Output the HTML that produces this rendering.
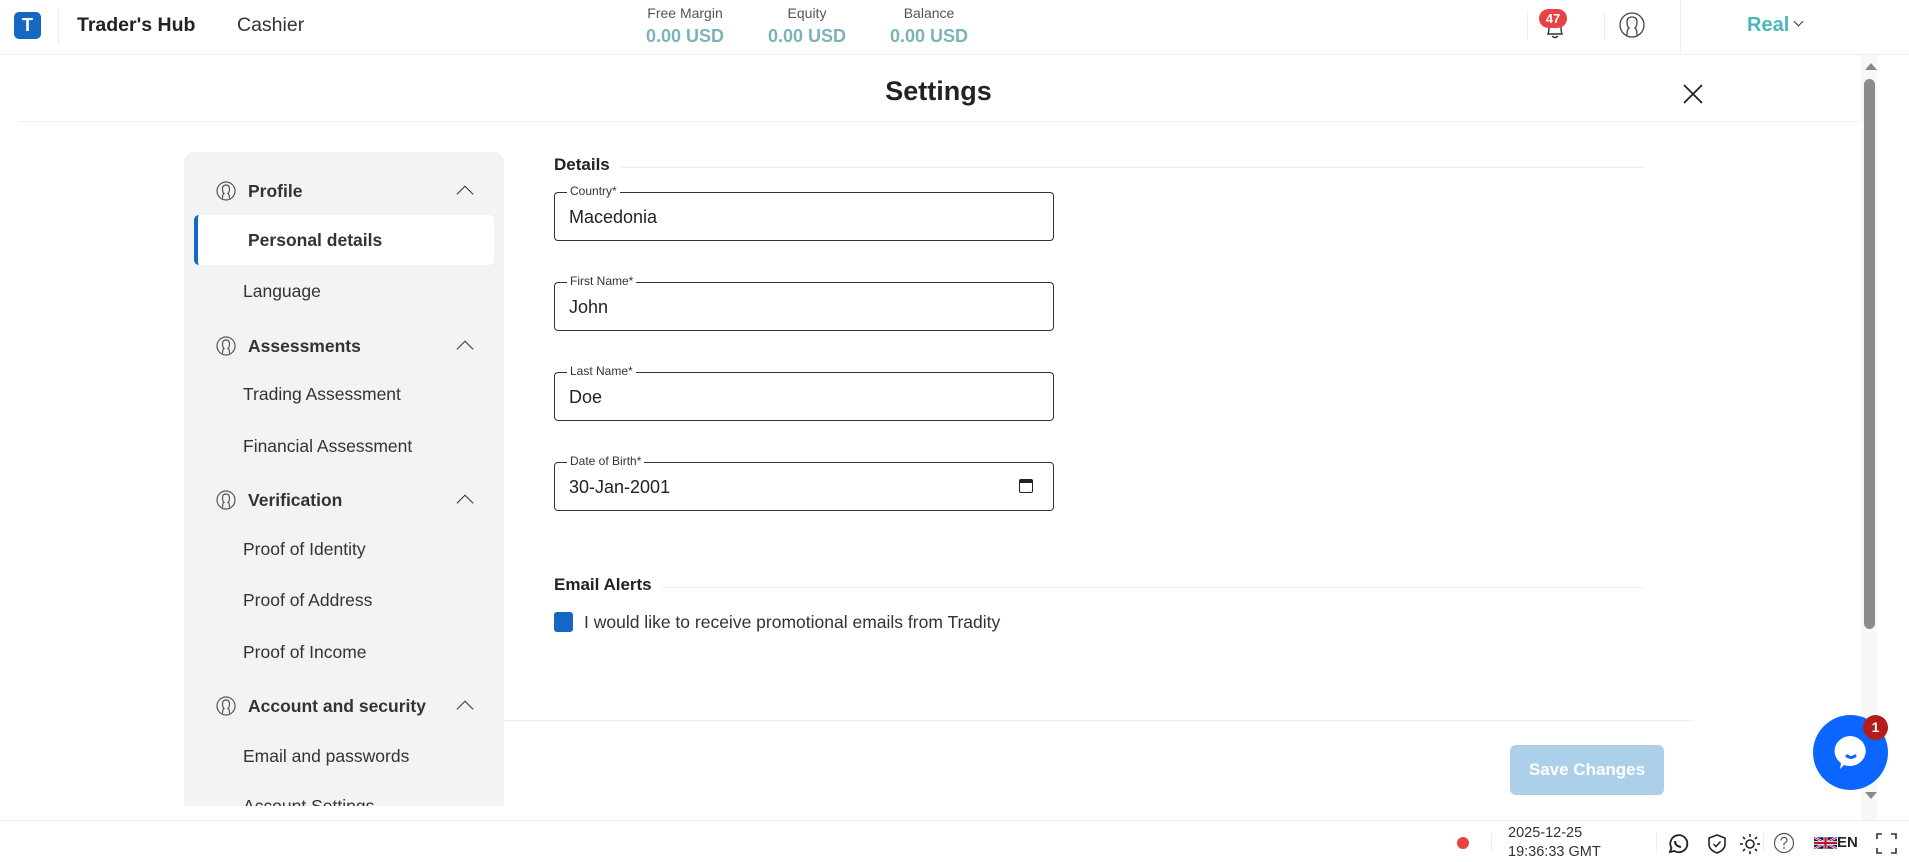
<!DOCTYPE html>
<html><head><meta charset="utf-8"><style>
*{box-sizing:border-box;margin:0;padding:0}
body{width:1909px;height:862px;overflow:hidden;background:#fff;font-family:"Liberation Sans",sans-serif;color:#333;position:relative}
.a{position:absolute}
.hdr{left:0;top:0;width:1909px;height:55px;border-bottom:1px solid #eee}
.lbl{font-size:14px;color:#555;text-align:center;width:120px}
.val{font-size:18px;font-weight:bold;color:#7ab4b8;text-align:center;width:130px}
.side{left:184px;top:152px;width:320px;height:654px;background:#f2f3f4;border-radius:10px 10px 0 0}
.it{font-size:17.5px;color:#333}
.hd{font-size:17.5px;font-weight:bold;color:#333}
.chev{width:12px;height:12px;border-left:1.8px solid #333;border-top:1.8px solid #333;transform:rotate(45deg)}
.inp{left:554px;width:500px;height:49px;border:1.5px solid #333;border-radius:4px}
.inp span.l{position:absolute;left:12px;top:-9px;background:#fff;padding:0 3px;font-size:12px;color:#333}
.inp span.v{position:absolute;left:14px;top:14px;font-size:18px;color:#222}
</style></head><body>
<div class="a hdr"></div>
<div class="a" style="left:14px;top:12px;width:27px;height:27px;background:#1467c2;border-radius:5px;color:#fff;font-weight:bold;font-size:18px;text-align:center;line-height:27px">T</div>
<div class="a" style="left:58px;top:8px;width:1px;height:36px;background:#eee"></div>
<div class="a" style="left:77px;top:14px;font-size:19.5px;font-weight:bold;color:#222">Trader's Hub</div>
<div class="a" style="left:237px;top:14px;font-size:19.5px;color:#333">Cashier</div>
<div class="a lbl" style="left:625px;top:5px">Free Margin</div><div class="a val" style="left:620px;top:26px">0.00 USD</div>
<div class="a lbl" style="left:747px;top:5px">Equity</div><div class="a val" style="left:742px;top:26px">0.00 USD</div>
<div class="a lbl" style="left:869px;top:5px">Balance</div><div class="a val" style="left:864px;top:26px">0.00 USD</div>
<div class="a" style="left:1527px;top:11px;width:1px;height:29px;background:#eee"></div>
<div class="a" style="left:1604px;top:11px;width:1px;height:29px;background:#eee"></div>
<div class="a" style="left:1680px;top:0;width:1px;height:55px;background:#eee"></div>
<svg class="a" style="left:1543px;top:14px" width="24" height="26" viewBox="0 0 24 26"><path d="M5 20 Q6 18 6 12 Q6 6 12 6 Q18 6 18 12 Q18 18 19 20 Z M9 22 Q12 25 15 22" fill="none" stroke="#333" stroke-width="1.4"/></svg>
<div class="a" style="left:1539px;top:9px;width:28px;height:19px;background:#e84343;border-radius:10px;color:#fff;font-weight:bold;font-size:13px;text-align:center;line-height:19px">47</div>
<svg class="a" style="left:1619px;top:12px" width="26" height="26" viewBox="0 0 26 26"><circle cx="13" cy="13" r="12" fill="none" stroke="#444" stroke-width="1.3"/><path d="M8 23 Q8 17 10 16 Q8 14 8 10 Q8 5 13 5 Q18 5 18 10 Q18 14 16 16 Q18 17 18 23" fill="none" stroke="#444" stroke-width="1.3"/></svg>
<div class="a" style="left:1747px;top:14px;font-size:20px;font-weight:bold;color:#4ab8b8">Real</div>
<div class="a" style="left:1795px;top:18px;width:7px;height:7px;border-right:1.5px solid #333;border-bottom:1.5px solid #333;transform:rotate(45deg)"></div>

<div class="a" style="left:0;width:1877px;top:76px;text-align:center;font-size:27px;font-weight:bold;color:#222">Settings</div>
<div class="a" style="left:18px;top:121px;width:1842px;height:1px;background:#eee"></div>
<svg class="a" style="left:1683px;top:84px" width="20" height="20"><path d="M1 1L19 19M19 1L1 19" stroke="#222" stroke-width="1.8"/></svg>

<div class="a" style="left:1861px;top:55px;width:16px;height:766px;background:#f8f8f8"></div>
<div class="a" style="left:1865px;top:63px;width:0;height:0;border-left:6px solid transparent;border-right:6px solid transparent;border-bottom:7px solid #888"></div>
<div class="a" style="left:1864px;top:79px;width:11px;height:550px;background:#8c8c8c;border-radius:6px"></div>
<div class="a" style="left:1865px;top:792px;width:0;height:0;border-left:6px solid transparent;border-right:6px solid transparent;border-top:7px solid #888"></div>

<div class="a side"></div>
<div class="a" style="left:194px;top:215px;width:300px;height:50px;background:#fff;border-radius:5px;border-left:4px solid #1467c2"></div>
<svg width="0" height="0" style="position:absolute"><defs><symbol id="pi" viewBox="0 0 20 20"><circle cx="10" cy="10" r="9" fill="none" stroke="#555" stroke-width="1.2"/><path d="M6.5 17.5 Q6.5 13 8 12.5 Q6.5 11 6.5 8 Q6.5 4 10 4 Q13.5 4 13.5 8 Q13.5 11 12 12.5 Q13.5 13 13.5 17.5" fill="none" stroke="#555" stroke-width="1.2"/></symbol></defs></svg>
<svg class="a" style="left:216px;top:181px" width="20" height="20"><use href="#pi"/></svg><div class="a hd" style="left:248px;top:181px">Profile</div><div class="a chev" style="left:459px;top:188px"></div>
<div class="a hd" style="left:248px;top:230px">Personal details</div>
<div class="a it" style="left:243px;top:281px">Language</div>
<svg class="a" style="left:216px;top:336px" width="20" height="20"><use href="#pi"/></svg><div class="a hd" style="left:248px;top:336px">Assessments</div><div class="a chev" style="left:459px;top:343px"></div>
<div class="a it" style="left:243px;top:384px">Trading Assessment</div>
<div class="a it" style="left:243px;top:436px">Financial Assessment</div>
<svg class="a" style="left:216px;top:490px" width="20" height="20"><use href="#pi"/></svg><div class="a hd" style="left:248px;top:490px">Verification</div><div class="a chev" style="left:459px;top:497px"></div>
<div class="a it" style="left:243px;top:539px">Proof of Identity</div>
<div class="a it" style="left:243px;top:590px">Proof of Address</div>
<div class="a it" style="left:243px;top:642px">Proof of Income</div>
<svg class="a" style="left:216px;top:696px" width="20" height="20"><use href="#pi"/></svg><div class="a hd" style="left:248px;top:696px">Account and security</div><div class="a chev" style="left:459px;top:703px"></div>
<div class="a it" style="left:243px;top:746px">Email and passwords</div>
<div class="a" style="left:184px;top:791px;width:320px;height:15px;overflow:hidden"><div class="it" style="position:absolute;left:59px;top:5px">Account Settings</div></div>
<div class="a" style="left:184px;top:806px;width:330px;height:14px;background:#fff"></div>

<div class="a" style="left:554px;top:155px;font-size:17px;font-weight:bold;color:#222">Details</div>
<div class="a" style="left:621px;top:167px;width:1023px;height:1px;background:#eee"></div>
<div class="a inp" style="top:192px"><span class="l">Country*</span><span class="v">Macedonia</span></div>
<div class="a inp" style="top:282px"><span class="l">First Name*</span><span class="v">John</span></div>
<div class="a inp" style="top:372px"><span class="l">Last Name*</span><span class="v">Doe</span></div>
<div class="a inp" style="top:462px"><span class="l">Date of Birth*</span><span class="v">30-Jan-2001</span>
<div style="position:absolute;right:20px;top:16px;width:14px;height:14px;border:1.8px solid #222;border-top-width:4px;border-radius:2px"></div></div>
<div class="a" style="left:554px;top:575px;font-size:17px;font-weight:bold;color:#222">Email Alerts</div>
<div class="a" style="left:662px;top:587px;width:982px;height:1px;background:#eee"></div>
<div class="a" style="left:554px;top:612px;width:19px;height:20px;background:#1467c2;border-radius:3px"></div>
<div class="a" style="left:584px;top:612px;font-size:17.5px;color:#333">I would like to receive promotional emails from Tradity</div>
<div class="a" style="left:504px;top:720px;width:1190px;height:1px;background:#eee"></div>
<div class="a" style="left:1510px;top:745px;width:154px;height:50px;background:#acd0ea;border-radius:6px;color:#fff;font-weight:bold;font-size:17px;text-align:center;line-height:50px">Save Changes</div>

<div class="a" style="left:1813px;top:715px;width:75px;height:75px;background:#0a66ff;border-radius:50%"></div>
<svg class="a" style="left:1830px;top:732px" width="40" height="40" viewBox="0 0 40 40"><path d="M20 4 A16 15 0 1 1 14 33 L10 37 L11 31 A16 15 0 0 1 20 4Z" fill="#fff"/><path d="M17 24 Q21 27 25 24" stroke="#0a66ff" stroke-width="3" fill="none" stroke-linecap="round"/></svg>
<div class="a" style="left:1863px;top:715px;width:25px;height:25px;background:#b71c1c;border-radius:50%;color:#fff;font-size:14px;font-weight:bold;text-align:center;line-height:25px">1</div>

<div class="a" style="left:0;top:820px;width:1909px;height:1px;background:#eee"></div>
<div class="a" style="left:1457px;top:837px;width:12px;height:12px;background:#e84343;border-radius:50%"></div>
<div class="a" style="left:1491px;top:833px;width:1px;height:20px;background:#eee"></div>
<div class="a" style="left:1508px;top:824px;font-size:14.5px;color:#333;line-height:19px">2025-12-25<br>19:36:33 GMT</div>
<div class="a" style="left:1656px;top:833px;width:1px;height:20px;background:#eee"></div>
<svg class="a" style="left:1667px;top:833px" width="22" height="22" viewBox="0 0 22 22"><path d="M3 19 L4.5 15 A8.5 8.5 0 1 1 7.5 18 Z" fill="none" stroke="#222" stroke-width="1.8"/><path d="M8 8 Q8 13 14 14" stroke="#222" stroke-width="2" fill="none"/></svg>
<svg class="a" style="left:1707px;top:833px" width="20" height="22" viewBox="0 0 20 22"><path d="M10 2 L18 5 V11 Q18 17 10 20 Q2 17 2 11 V5 Z" fill="none" stroke="#222" stroke-width="1.6"/><path d="M6.5 11 L9 13.5 L13.5 8.5" fill="none" stroke="#222" stroke-width="1.5"/></svg>
<svg class="a" style="left:1739px;top:833px" width="22" height="22" viewBox="0 0 22 22"><circle cx="11" cy="11" r="4" fill="none" stroke="#222" stroke-width="1.6"/><path d="M11 1v3M11 18v3M1 11h3M18 11h3M4 4l2 2M16 16l2 2M4 18l2-2M16 6l2-2" stroke="#222" stroke-width="1.6"/></svg>
<div class="a" style="left:1763px;top:833px;width:1px;height:20px;background:#eee"></div>
<svg class="a" style="left:1773px;top:832px" width="22" height="22" viewBox="0 0 22 22"><circle cx="11" cy="11" r="9.5" fill="none" stroke="#555" stroke-width="1.2"/><path d="M8 8.5 Q8 5.5 11 5.5 Q14 5.5 14 8.3 Q14 10 11 11.5 V13.5" fill="none" stroke="#555" stroke-width="1.2"/><circle cx="11" cy="16" r=".9" fill="#555"/></svg>
<svg class="a" style="left:1814px;top:836px" width="23" height="14" viewBox="0 0 60 30"><rect width="60" height="30" fill="#012169"/><path d="M0 0L60 30M60 0L0 30" stroke="#fff" stroke-width="6"/><path d="M0 0L60 30M60 0L0 30" stroke="#c8102e" stroke-width="2.5"/><path d="M30 0V30M0 15H60" stroke="#fff" stroke-width="10"/><path d="M30 0V30M0 15H60" stroke="#c8102e" stroke-width="6"/></svg>
<div class="a" style="left:1837px;top:834px;font-size:15px;font-weight:bold;color:#222">EN</div>
<svg class="a" style="left:1876px;top:833px" width="21" height="21" viewBox="0 0 21 21"><path d="M1 6V1H6M15 1H20V6M20 15V20H15M6 20H1V15" fill="none" stroke="#333" stroke-width="1.6"/></svg>
</body></html>
